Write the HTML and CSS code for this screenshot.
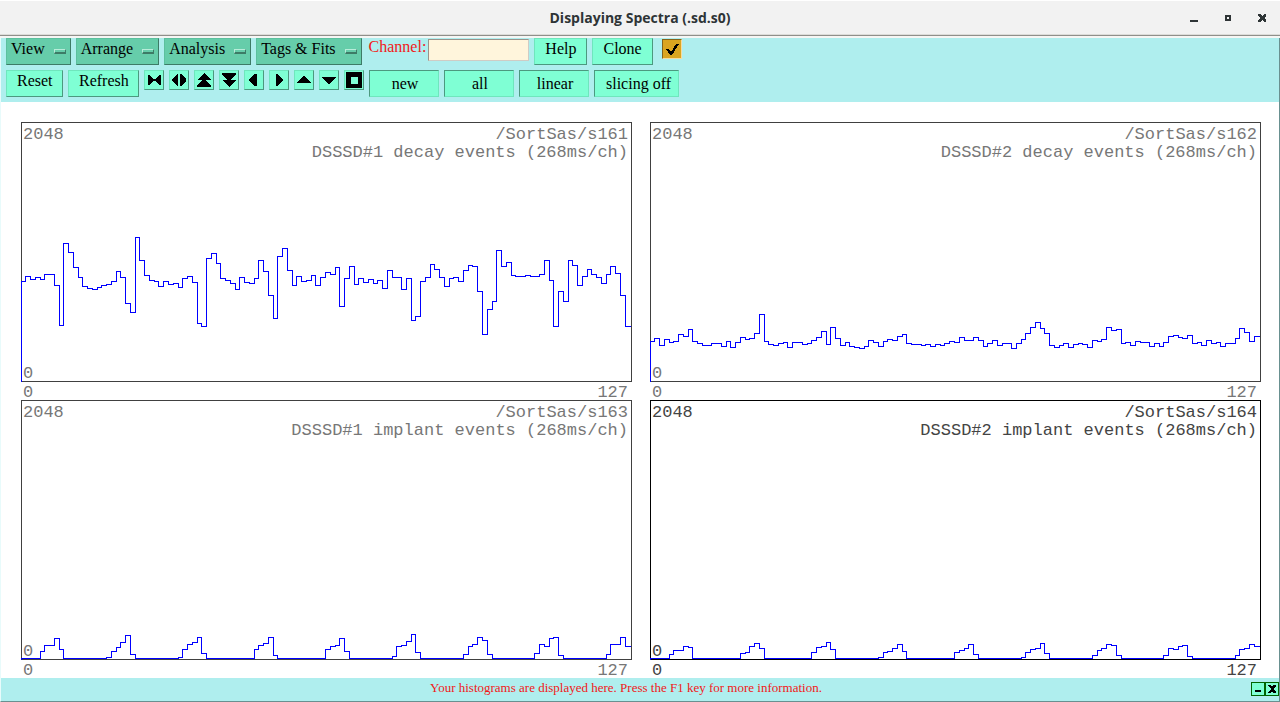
FILE: index.html
```html
<!DOCTYPE html>
<html lang="en">
<head>
    <meta charset="UTF-8">
    <meta name="viewport" content="width=device-width, initial-scale=1.0">
    <title>Displaying Spectra (.sd.s0)</title>
    <link rel="stylesheet" href="styles.css">
</head>
<body>
    <!-- Window title bar -->
    <header class="titlebar">
        <h1>Displaying Spectra (.sd.s0)</h1>
        <div class="window-buttons">
            <button aria-label="Minimize"><svg width="10" height="10" viewBox="0 0 10 10"><path d="M1 7h8v2H1z"/></svg></button>
            <button aria-label="Maximize"><svg width="10" height="10" viewBox="0 0 10 10"><path fill-rule="evenodd" d="M2 2h6v6H2zM4 4v2h2V4z"/></svg></button>
            <button aria-label="Close"><svg width="10" height="10" viewBox="0 0 10 10"><path d="M1 1h2l2 2 2-2h2v2L7 5l2 2v2H7L5 7 3 9H1V7l2-2-2-2z"/></svg></button>
        </div>
    </header>

    <!-- Toolbar -->
    <div class="toolbar">
        <div class="toolbar-row">
            <button class="btn menu">View <i></i></button>
            <button class="btn menu">Arrange <i></i></button>
            <button class="btn menu">Analysis <i></i></button>
            <button class="btn menu">Tags &amp; Fits <i></i></button>
            <div class="channel">
                <label for="channel">Channel:</label>
                <input type="text" id="channel">
            </div>
            <button class="btn">Help</button>
            <button class="btn">Clone</button>
            <button class="check" aria-label="Apply"><svg width="16" height="16" viewBox="0 0 16 16"><path d="M2 8h3l2 3 5-8h3L8 14H6z"/></svg></button>
        </div>
        <div class="toolbar-row">
            <button class="btn reset">Reset</button>
            <button class="btn refresh">Refresh</button>
            <button class="btn icon" aria-label="Contract"><svg viewBox="0 0 20 20"><path d="M4 5h1l5 4h1l5-4h1v10h-1l-5-4h-1l-5 4H4z"/></svg></button>
            <button class="btn icon" aria-label="Expand"><svg viewBox="0 0 20 20"><path d="M9 4v12H8l-5-5V9l5-5zM11 4v12h1l5-5V9l-5-5z"/></svg></button>
            <button class="btn icon" aria-label="Double up"><svg viewBox="0 0 20 20"><path d="M10 3l7 7H3zM10 9l7 6v2H3v-2z"/></svg></button>
            <button class="btn icon" aria-label="Double down"><svg viewBox="0 0 20 20"><path d="M3 3h14v2l-7 6-7-6zM3 10h14l-7 7z"/></svg></button>
            <button class="btn icon" aria-label="Left"><svg viewBox="0 0 20 20"><path d="M13 4v12h-2l-6-5V9l6-5z"/></svg></button>
            <button class="btn icon" aria-label="Right"><svg viewBox="0 0 20 20"><path d="M7 4v12h1l6-5V9L8 4z"/></svg></button>
            <button class="btn icon" aria-label="Up"><svg viewBox="0 0 20 20"><path d="M10 6l7 6v1H3v-1z"/></svg></button>
            <button class="btn icon" aria-label="Down"><svg viewBox="0 0 20 20"><path d="M3 7h14v1l-7 6-7-6z"/></svg></button>
            <button class="btn icon" aria-label="Full view"><svg viewBox="0 0 20 20"><path fill-rule="evenodd" d="M2 2h16v16H2zM7 7v7h7V7z"/></svg></button>
            <button class="btn toggle">new</button>
            <button class="btn toggle">all</button>
            <button class="btn toggle">linear</button>
            <button class="btn toggle wide">slicing off</button>
        </div>
    </div>

    <!-- Histograms -->
    <main class="plots">
        <section class="plot">
            <div class="frame">
                <svg class="trace" viewBox="0 0 611 260" preserveAspectRatio="none"><path id="s161"/></svg>
                <div class="row"><span>2048</span><span>/SortSas/s161</span></div>
                <h2>DSSSD#1 decay events (268ms/ch)</h2>
                <span class="ymin">0</span>
            </div>
            <div class="axis"><span>0</span><span>127</span></div>
        </section>
        <section class="plot">
            <div class="frame">
                <svg class="trace" viewBox="0 0 611 260" preserveAspectRatio="none"><path id="s162"/></svg>
                <div class="row"><span>2048</span><span>/SortSas/s162</span></div>
                <h2>DSSSD#2 decay events (268ms/ch)</h2>
                <span class="ymin">0</span>
            </div>
            <div class="axis"><span>0</span><span>127</span></div>
        </section>
        <section class="plot">
            <div class="frame">
                <svg class="trace" viewBox="0 0 611 260" preserveAspectRatio="none"><path id="s163"/></svg>
                <div class="row"><span>2048</span><span>/SortSas/s163</span></div>
                <h2>DSSSD#1 implant events (268ms/ch)</h2>
                <span class="ymin">0</span>
            </div>
            <div class="axis"><span>0</span><span>127</span></div>
        </section>
        <section class="plot active">
            <div class="frame">
                <svg class="trace" viewBox="0 0 611 260" preserveAspectRatio="none"><path id="s164"/></svg>
                <div class="row"><span>2048</span><span>/SortSas/s164</span></div>
                <h2>DSSSD#2 implant events (268ms/ch)</h2>
                <span class="ymin">0</span>
            </div>
            <div class="axis"><span>0</span><span>127</span></div>
        </section>
    </main>

    <!-- Status line -->
    <footer class="status">
        <p>Your histograms are displayed here. Press the F1 key for more information.</p>
        <button aria-label="Hide"><svg width="10" height="10" viewBox="0 0 10 10"><path d="M2 6h6v2H2z"/></svg></button>
        <button aria-label="Quit"><svg width="10" height="10" viewBox="0 0 10 10"><path d="M1 1h3l1 2 1-2h3v1L6 5l3 3v1H6L5 7 4 9H1V8l3-3-3-3z"/></svg></button>
    </footer>

    <script src="script.js"></script>
</body>
</html>
```
FILE: styles.css
```css
* {
    box-sizing: border-box;
}

body {
    margin: 0;
    min-height: 100vh;
    display: flex;
    flex-direction: column;
    font-family: "Liberation Serif", serif;
    font-size: 16px;
    color: #000;
    background-color: #fff;
}

button {
    font: inherit;
    color: inherit;
    padding: 0;
    border: none;
    background: none;
}

svg {
    display: block;
    shape-rendering: crispEdges;
}

/* Title bar */
.titlebar {
    height: 38px;
    display: grid;
    grid-template-columns: 1fr auto 1fr;
    align-items: center;
    padding: 0 13px;
    background: linear-gradient(#fff 0 1px, #f2f2f2 1px 34px, #dcdcd9 34px 35px, #8f8f8a 35px 36px, #f6f6f4 36px);
}

.titlebar h1 {
    grid-column: 2;
    margin: 0;
    font-family: "Open Sans", sans-serif;
    font-size: 14px;
    font-weight: 700;
    line-height: 34px;
    padding-bottom: 2px;
    color: #2e3436;
}

.window-buttons {
    display: flex;
    justify-content: flex-end;
    gap: 24px;
    padding-bottom: 2px;
    fill: #2e3436;
}

/* Toolbar */
.toolbar {
    height: 64px;
    display: flex;
    flex-direction: column;
    gap: 5px;
    padding-left: 5px;
    background-color: #afeeee;
    border-left: 1px solid #e8fbfb;
    border-right: 1px solid #699090;
}

.toolbar-row {
    display: flex;
    align-items: flex-start;
    gap: 5px;
}

.btn {
    height: 27px;
    padding: 0 10px 6px;
    line-height: 18px;
    white-space: nowrap;
    background-color: #7fffd4;
    border: 1px solid;
    border-color: #6fe6bd #4c997f #4c997f #6fe6bd;
}

.menu {
    display: flex;
    align-items: center;
    gap: 9px;
    padding: 0 4px 6px;
    background-color: #66cdaa;
    border-color: #5cc09e #3d7b66 #3d7b66 #5cc09e;
}

.menu i {
    width: 12px;
    height: 5px;
    margin-top: 6px;
    border: 1px solid;
    border-width: 1px 1px 2px 1px;
    border-color: #b8ecd9 #3d7b66 #3d7b66 #b8ecd9;
}

.channel {
    display: flex;
    align-items: flex-start;
    gap: 2px;
    padding-left: 2px;
    line-height: 18px;
    color: #f21818;
}

.channel input {
    width: 101px;
    height: 22px;
    margin-top: 1px;
    padding: 0 4px;
    font: inherit;
    background-color: #fff5dc;
    border: 1px solid;
    border-color: #99938a #d0ccc5 #d0ccc5 #99938a;
    border-radius: 0;
}

.check {
    margin: 1px 0 0 4px;
    padding: 1px;
    background-color: #daa520;
    border: 1px solid;
    border-color: #83631a #f4dca0 #f4dca0 #83631a;
}

.reset {
    width: 57px;
}

.refresh {
    width: 71px;
}

.icon {
    width: 20px;
    height: 20px;
    padding: 0;
}

.icon svg {
    width: 20px;
    height: 20px;
    margin: -1px;
}

.toggle {
    width: 70px;
    padding: 0 2px 0 4px;
    border-color: #4c997f #6fe6bd #6fe6bd #4c997f;
}

.toggle.wide {
    width: 85px;
    padding-left: 6px;
}

/* Histograms */
.plots {
    flex: 1;
    display: grid;
    grid-template-columns: 1fr 1fr;
    grid-auto-rows: 1fr;
    column-gap: 18px;
    padding: 20px 18px 0 20px;
    border-left: 1px solid #e8fbfb;
    border-right: 1px solid #699090;
    font-family: "Liberation Mono", monospace;
    font-size: 17px;
    line-height: 18px;
    color: #777;
}

.plot {
    display: flex;
    flex-direction: column;
}

.plot.active {
    color: #444;
}

.frame {
    position: relative;
    flex: 1;
    display: flex;
    flex-direction: column;
    padding: 3px 3px 0 1px;
    border: 1px solid #404040;
}

.active .frame {
    border-color: #000;
}

.row,
.axis {
    display: flex;
    justify-content: space-between;
}

.frame h2 {
    margin: 0;
    font: inherit;
    text-align: right;
}

.ymin {
    margin-top: auto;
    line-height: 14px;
}

.axis {
    padding: 4px 4px 0 2px;
    line-height: 14px;
}

/* The trace is drawn over the frame border */
.trace {
    position: absolute;
    top: -1px;
    left: -1px;
    width: calc(100% + 2px);
    height: calc(100% + 2px);
}

.trace path {
    fill: none;
    stroke: #00f;
    stroke-width: 1;
    vector-effect: non-scaling-stroke;
}

/* Status line */
.status {
    height: 24px;
    display: flex;
    align-items: flex-start;
    padding-top: 4px;
    background-color: #afeeee;
    border-left: 1px solid #e8fbfb;
    border-right: 1px solid #699090;
    border-bottom: 1px solid #699090;
}

.status p {
    flex: 1;
    margin: 0;
    font-size: 13px;
    line-height: 12px;
    text-align: center;
    color: #f21818;
}

.status button {
    width: 14px;
    height: 14px;
    padding: 1px;
    background-color: #7fffd4;
    border: 1px solid #006400;
}
```
FILE: script.js
```javascript
// Bin heights for each spectrum, 128 channels
const spectra = {
    s161: [
        100, 105, 102, 104, 102, 107, 107, 96, 56, 138, 129, 114, 104, 95, 93, 92,
        94, 96, 97, 100, 110, 104, 78, 69, 144, 121, 106, 101, 100, 95, 100, 97,
        98, 94, 103, 105, 99, 58, 55, 123, 128, 118, 103, 101, 98, 92, 104, 99,
        98, 103, 121, 110, 86, 63, 125, 133, 111, 96, 105, 100, 101, 106, 96, 104,
        109, 107, 114, 75, 103, 115, 97, 103, 99, 102, 98, 101, 93, 111, 104, 104,
        92, 103, 61, 65, 100, 104, 117, 112, 104, 95, 103, 104, 100, 111, 116, 115,
        90, 47, 72, 80, 131, 115, 119, 106, 105, 105, 106, 105, 105, 107, 121, 101,
        55, 90, 80, 121, 116, 96, 105, 112, 107, 104, 98, 107, 115, 108, 86, 55
    ],
    s162: [
        40, 43, 36, 42, 39, 40, 47, 45, 52, 40, 38, 36, 36, 38, 38, 35,
        40, 34, 39, 44, 42, 43, 48, 67, 40, 37, 36, 38, 39, 34, 39, 39,
        37, 38, 41, 44, 50, 37, 54, 43, 36, 39, 35, 34, 33, 35, 41, 39,
        35, 40, 42, 41, 45, 47, 38, 37, 37, 36, 37, 35, 37, 36, 38, 40,
        39, 44, 41, 41, 44, 41, 35, 38, 41, 36, 38, 38, 33, 38, 42, 48,
        54, 59, 53, 48, 36, 34, 36, 38, 34, 37, 38, 37, 34, 41, 40, 42,
        54, 51, 52, 38, 39, 36, 40, 39, 39, 35, 38, 35, 39, 45, 46, 44,
        43, 46, 38, 39, 36, 41, 38, 39, 35, 38, 38, 43, 53, 49, 40, 45
    ],
    s163: [
        1, 1, 1, 1, 8, 14, 14, 21, 10, 1, 1, 1, 1, 1, 1, 1,
        1, 1, 2, 8, 12, 17, 24, 5, 1, 1, 1, 1, 1, 1, 1, 1,
        1, 2, 10, 15, 17, 22, 6, 1, 1, 1, 1, 1, 1, 1, 1, 1,
        1, 10, 14, 16, 22, 4, 1, 1, 1, 1, 1, 1, 1, 1, 1, 1,
        10, 13, 14, 21, 8, 1, 1, 1, 1, 1, 1, 1, 1, 1, 3, 13,
        14, 18, 25, 7, 1, 1, 1, 1, 1, 1, 1, 1, 1, 5, 13, 15,
        22, 19, 5, 1, 1, 1, 1, 1, 1, 1, 1, 1, 6, 15, 13, 21,
        22, 4, 1, 1, 1, 1, 1, 1, 1, 1, 1, 5, 15, 15, 22, 13
    ],
    s164: [
        1, 1, 1, 1, 5, 9, 9, 13, 12, 1, 1, 1, 1, 1, 1, 1,
        1, 1, 1, 6, 7, 13, 16, 11, 1, 1, 1, 1, 1, 1, 1, 1,
        1, 1, 7, 12, 13, 17, 10, 1, 1, 1, 1, 1, 1, 1, 1, 1,
        2, 7, 8, 11, 15, 8, 1, 1, 1, 1, 1, 1, 1, 1, 1, 1,
        7, 9, 11, 15, 5, 1, 1, 1, 1, 1, 1, 1, 1, 1, 2, 7,
        10, 11, 16, 6, 1, 1, 1, 1, 1, 1, 1, 1, 1, 4, 9, 11,
        15, 14, 4, 1, 1, 1, 1, 1, 1, 1, 1, 1, 4, 11, 10, 13,
        14, 3, 1, 1, 1, 1, 1, 1, 1, 1, 1, 4, 10, 11, 15, 13
    ]
};

// Draw a stepped outline for one spectrum
function drawSpectrum(id, bins) {
    let d = "M0.5 259.5";
    bins.forEach((height, i) => {
        const end = Math.floor((i + 1) * 609 / bins.length) + 0.5;
        d += `V${259.5 - height}H${end}`;
    });
    document.getElementById(id).setAttribute("d", d);
}

for (const id in spectra) {
    drawSpectrum(id, spectra[id]);
}
```
